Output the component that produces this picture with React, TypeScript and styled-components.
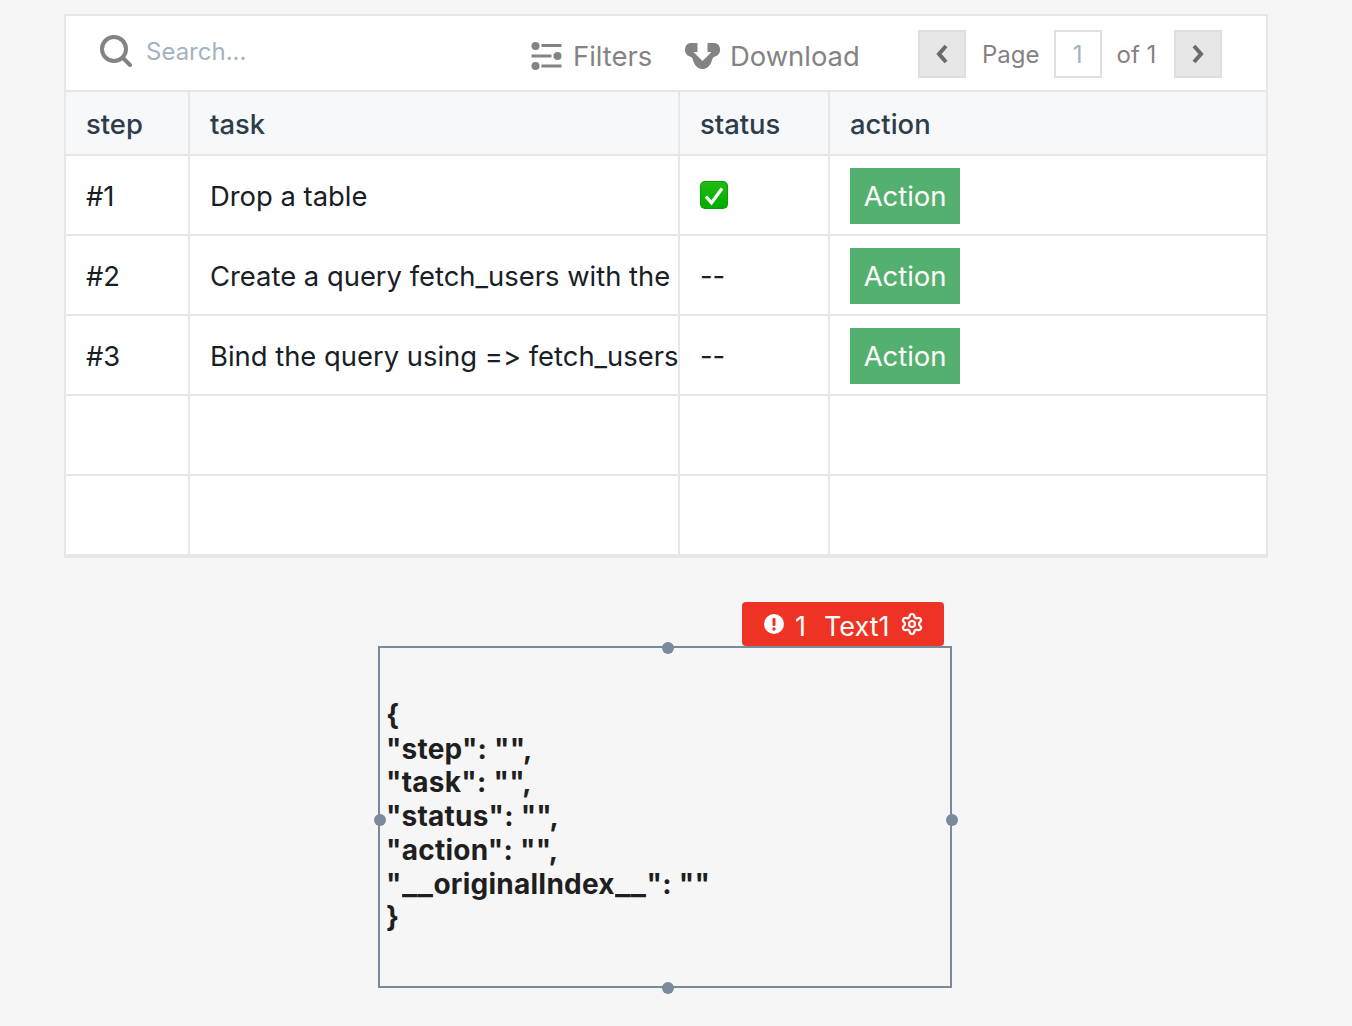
import React from 'react';
import styled, { createGlobalStyle } from 'styled-components';
import { Settings } from 'lucide-react';

const GlobalStyle = createGlobalStyle`
  html, body { margin: 0; padding: 0; background: #f6f6f6; }
  body {
    font-family: Inter, "Liberation Sans", sans-serif;
    font-feature-settings: "calt" 0;
    width: 1352px;
    height: 1026px;
    overflow: hidden;
  }
`;

const Page = styled.div`
  padding: 14px 84px 0 64px;
`;

const TableCard = styled.section`
  border: 2px solid #e7e7e7;
  border-bottom-width: 4px;
  background: #fff;
`;

const Toolbar = styled.div`
  height: 74px;
  display: flex;
  align-items: center;
  color: #858282;
  font-size: 27.4px;
`;

const SearchBox = styled.div`
  display: flex;
  align-items: center;
  gap: 14px;
  width: 431px;
  margin-left: 34px;
  margin-top: -4px;
`;

const SearchText = styled.span`
  color: #a3b3bf;
  font-size: 24px;
`;

const ToolItem = styled.div<{ $width: number; $gap: number }>`
  display: flex;
  align-items: center;
  gap: ${(p) => p.$gap}px;
  width: ${(p) => p.$width}px;
  padding-top: 6px;
  box-sizing: border-box;
  white-space: nowrap;
  svg { flex-shrink: 0; }
`;

const Pagination = styled.div`
  display: flex;
  align-items: center;
  margin: 2px 0 0 60px;
  font-size: 24px;
`;

const PageButton = styled.button`
  width: 48px;
  height: 48px;
  padding: 0;
  display: flex;
  align-items: center;
  justify-content: center;
  background: #e7e7e7;
  border: 2px solid #dedede;
`;

const PageLabel = styled.span<{ $left: number; $right: number }>`
  margin: 0 ${(p) => p.$right}px 0 ${(p) => p.$left}px;
`;

const PageInput = styled.div`
  width: 48px;
  height: 48px;
  box-sizing: border-box;
  display: flex;
  align-items: center;
  justify-content: center;
  border: 2px solid #e0e0e0;
  color: #a3b3bf;
`;

const Row = styled.div<{ $header?: boolean }>`
  display: grid;
  grid-template-columns: 124px 490px 150px 1fr;
  height: ${(p) => (p.$header ? 64 : 80)}px;
  background: ${(p) => (p.$header ? '#f6f8fa' : '#fff')};
  color: ${(p) => (p.$header ? '#2e3d49' : '#182026')};
  font-size: 27.4px;
  font-weight: ${(p) => (p.$header ? 500 : 400)};
  border-top: 2px solid #e7e7e7;
  box-sizing: border-box;
`;

const Cell = styled.div`
  display: flex;
  align-items: center;
  padding: 2px 0 0 20px;
  border-right: 2px solid #e7e7e7;
  white-space: nowrap;
  overflow: hidden;
  &:last-child { border-right: none; }
`;

const ActionButton = styled.button`
  width: 110px;
  height: 56px;
  padding: 0;
  border: none;
  background: #54b06e;
  color: #fff;
  font: inherit;
  font-feature-settings: inherit;
`;

const CheckIcon = styled.svg`
  margin-top: -2px;
`;

const WidgetArea = styled.div`
  position: relative;
  width: 574px;
  height: 342px;
  box-sizing: border-box;
  margin: 88px 0 0 314px;
  padding: 0 6px;
  display: flex;
  align-items: center;
  border: 2px solid #798a9c;
`;

const JsonText = styled.div`
  font-size: 28px;
  font-weight: 700;
  letter-spacing: 0.25px;
  line-height: 33.67px;
  color: #1f1f1f;
  white-space: pre;
`;

const JsonLine = styled.div``;

// the underscores in the reference are wider than this Inter's
const WideUnderscore = styled.span`
  display: inline-block;
  letter-spacing: 0;
  margin-right: 5px;
  transform: scaleX(1.16);
  transform-origin: left;
`;

const Handle = styled.span<{ $x: string; $y: string }>`
  position: absolute;
  left: ${(p) => p.$x};
  top: ${(p) => p.$y};
  width: 12px;
  height: 12px;
  margin: -6px 0 0 -6px;
  border-radius: 50%;
  background: #798a9c;
`;

const ErrorTag = styled.div`
  position: absolute;
  right: 6px;
  top: -46px;
  width: 202px;
  height: 44px;
  box-sizing: border-box;
  padding: 4px 0 0 21px;
  display: flex;
  align-items: center;
  gap: 10px;
  background: #ee3324;
  color: #fff;
  font-size: 27px;
  border-radius: 4px;
`;

const TagIcon = styled.svg`
  margin-top: -4px;
`;

const TagGear = styled(Settings)`
  margin: -4px 0 0 0;
`;

const TagName = styled.span`
  margin-left: 8px;
`;

const rows = [
  { step: '#1', task: 'Drop a table', done: true },
  { step: '#2', task: 'Create a query fetch_users with the', done: false },
  { step: '#3', task: 'Bind the query using => fetch_users', done: false },
];

function CheckEmoji() {
  return (
    <CheckIcon width="28" height="28" viewBox="0 0 28 28">
      <defs>
        <linearGradient id="chk" x1="0" y1="0" x2="0" y2="1">
          <stop offset="0" stopColor="#1fbb12" />
          <stop offset="1" stopColor="#00ad00" />
        </linearGradient>
      </defs>
      <rect width="28" height="28" rx="5" fill="#0a9a0a" />
      <rect x="1" y="1" width="26" height="26" rx="4" fill="url(#chk)" />
      <path d="M6 15.500l5.500 6.500L22 7.500" fill="none" stroke="#fff" strokeWidth="3.200" />
    </CheckIcon>
  );
}

export default function App() {
  return (
    <Page>
      <GlobalStyle />
      <TableCard>
        <Toolbar>
          <SearchBox>
            <svg width="32" height="32" viewBox="0 0 32 32" fill="none" stroke="#858282" strokeWidth="4" strokeLinecap="round">
              <circle cx="14" cy="14" r="12" />
              <path d="M23 23l7 7" />
            </svg>
            <SearchText>Search...</SearchText>
          </SearchBox>
          <ToolItem $width={154} $gap={11}>
            <svg width="31" height="28" viewBox="0 0 30 28" fill="#858282">
              <circle cx="4" cy="4" r="4" />
              <rect x="10" y="2" width="20" height="3" />
              <rect y="12.500" width="20" height="3" />
              <circle cx="26" cy="14" r="4" />
              <circle cx="4" cy="24" r="4" />
              <rect x="10" y="22.500" width="20" height="3" />
            </svg>
            Filters
          </ToolItem>
          <ToolItem $width={173} $gap={10}>
            <svg width="35" height="26" viewBox="0 0 35 26">
              <path
                fill="#858282"
                d="M6 0H12.500V9H8.500L17.500 18L26.500 9H22.500V0H29C33 0 35 3 35 7C35 11 32 13 29 14C27 15 27 18 26 20C24 24 21 26 17.500 26C14 26 11 24 9 20C8 18 8 15 6 14C3 13 0 11 0 7C0 3 2 0 6 0Z"
              />
            </svg>
            Download
          </ToolItem>
          <Pagination>
            <PageButton aria-label="Previous">
              <svg width="14" height="20" viewBox="0 0 14 20" fill="none" stroke="#6b6b6b" strokeWidth="4">
                <path d="M11 2L4 10l7 8" />
              </svg>
            </PageButton>
            <PageLabel $left={16} $right={14}>Page</PageLabel>
            <PageInput>1</PageInput>
            <PageLabel $left={15} $right={18}>of 1</PageLabel>
            <PageButton aria-label="Next">
              <svg width="14" height="20" viewBox="0 0 14 20" fill="none" stroke="#6b6b6b" strokeWidth="4">
                <path d="M3 2l7 8-7 8" />
              </svg>
            </PageButton>
          </Pagination>
        </Toolbar>
        <Row $header>
          <Cell>step</Cell>
          <Cell>task</Cell>
          <Cell>status</Cell>
          <Cell>action</Cell>
        </Row>
        {rows.map((r) => (
          <Row key={r.step}>
            <Cell>{r.step}</Cell>
            <Cell>{r.task}</Cell>
            <Cell>{r.done ? <CheckEmoji /> : '--'}</Cell>
            <Cell>
              <ActionButton>Action</ActionButton>
            </Cell>
          </Row>
        ))}
        <Row>
          <Cell />
          <Cell />
          <Cell />
          <Cell />
        </Row>
        <Row>
          <Cell />
          <Cell />
          <Cell />
          <Cell />
        </Row>
      </TableCard>
      <WidgetArea>
        <ErrorTag>
          <TagIcon width="22" height="22" viewBox="0 0 22 22">
            <circle cx="11" cy="11" r="10" fill="#fff" />
            <rect x="9.500" y="5" width="3" height="8" rx="1" fill="#ee3324" />
            <circle cx="11" cy="16" r="1.700" fill="#ee3324" />
          </TagIcon>
          <span>1</span>
          <TagName>Text1</TagName>
          <TagGear size={24} color="#fff" strokeWidth={2.2} />
        </ErrorTag>
        <Handle $x="calc(50% + 3px)" $y="0px" />
        <Handle $x="0px" $y="calc(50% + 3px)" />
        <Handle $x="calc(100% + 2px)" $y="calc(50% + 3px)" />
        <Handle $x="calc(50% + 3px)" $y="calc(100% + 2px)" />
        <JsonText>
          <JsonLine>{'{'}</JsonLine>
          <JsonLine>{'"step": "",'}</JsonLine>
          <JsonLine>{'"task": "",'}</JsonLine>
          <JsonLine>{'"status": "",'}</JsonLine>
          <JsonLine>{'"action": "",'}</JsonLine>
          <JsonLine>
            {'"'}
            <WideUnderscore>__</WideUnderscore>
            originalIndex
            <WideUnderscore>__</WideUnderscore>
            {'": ""'}
          </JsonLine>
          <JsonLine>{'}'}</JsonLine>
        </JsonText>
      </WidgetArea>
    </Page>
  );
}
